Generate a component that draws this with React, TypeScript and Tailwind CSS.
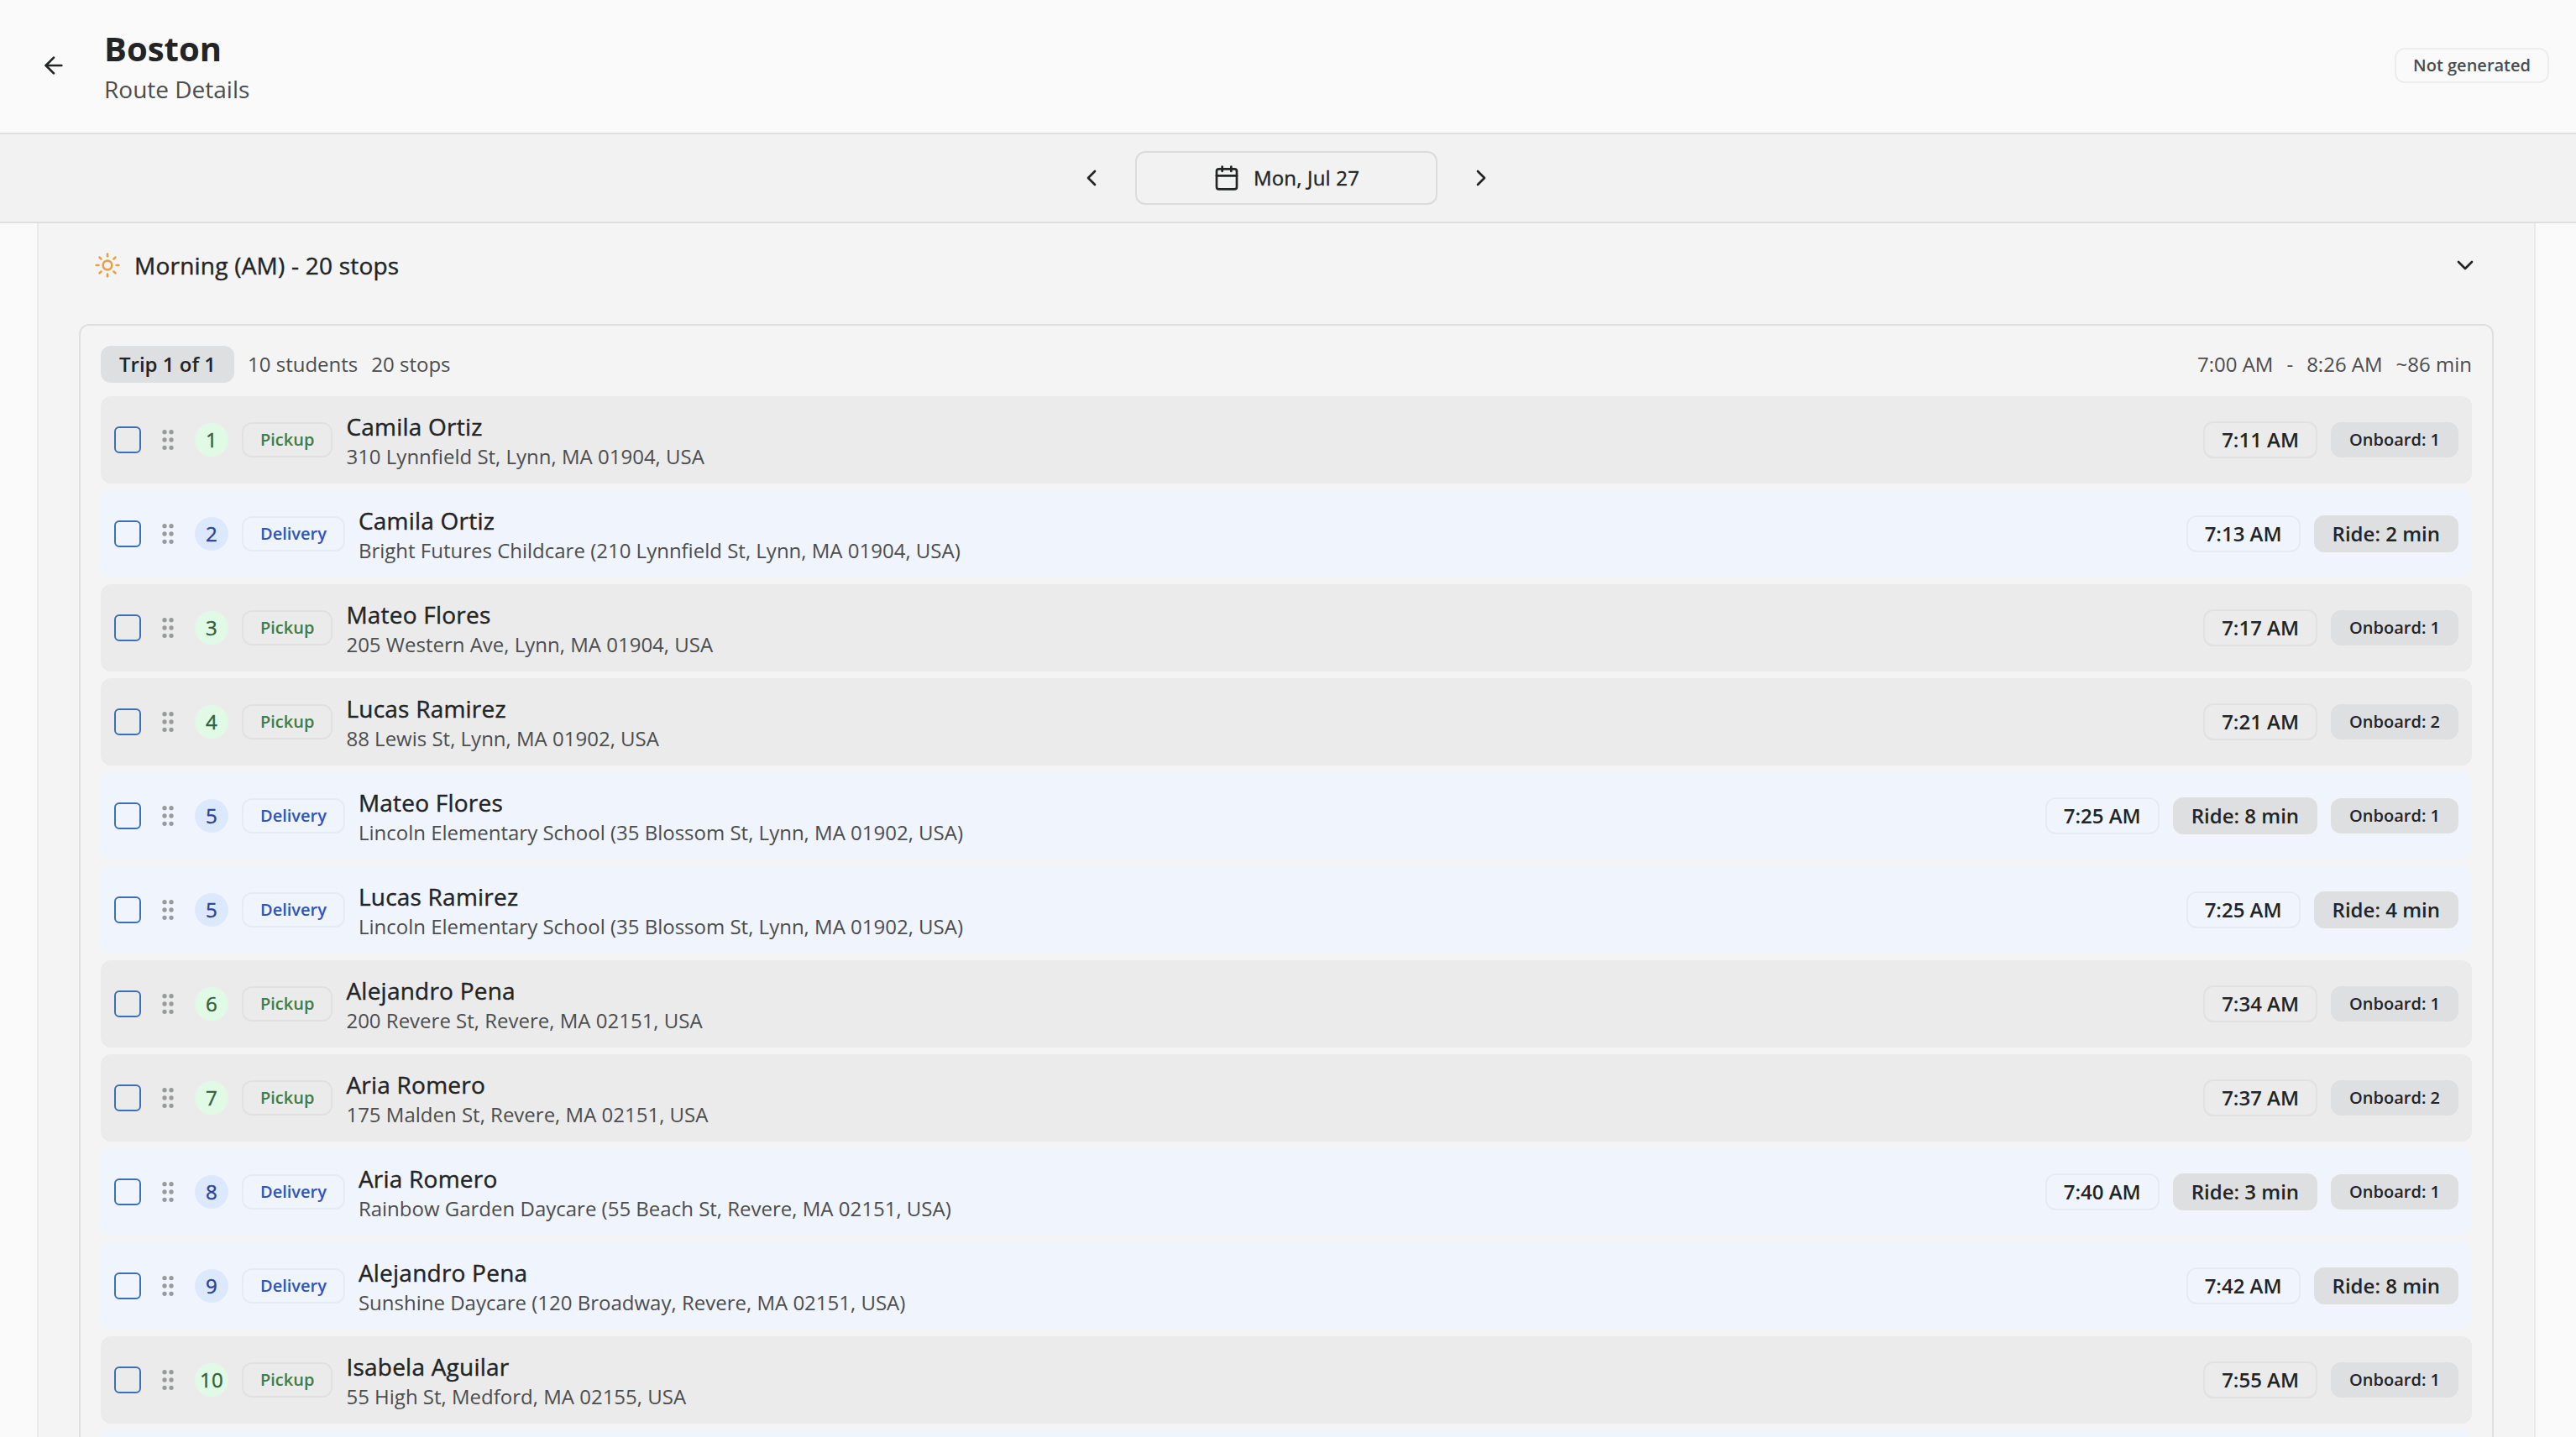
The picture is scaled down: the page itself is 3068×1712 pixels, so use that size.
import { useState } from "react";
import { ArrowLeft, Calendar, ChevronDown, ChevronLeft, ChevronRight, GripVertical, Sun } from "lucide-react";
import clsx from "clsx";

type Stop = {
  order: number;
  type: "pickup" | "delivery";
  name: string;
  address: string;
  time: string;
  ride?: string;
  onboard?: number;
};

const STOPS: Stop[] = [
  { order: 1, type: "pickup", name: "Camila Ortiz", address: "310 Lynnfield St, Lynn, MA 01904, USA", time: "7:11 AM", onboard: 1 },
  { order: 2, type: "delivery", name: "Camila Ortiz", address: "Bright Futures Childcare (210 Lynnfield St, Lynn, MA 01904, USA)", time: "7:13 AM", ride: "2 min" },
  { order: 3, type: "pickup", name: "Mateo Flores", address: "205 Western Ave, Lynn, MA 01904, USA", time: "7:17 AM", onboard: 1 },
  { order: 4, type: "pickup", name: "Lucas Ramirez", address: "88 Lewis St, Lynn, MA 01902, USA", time: "7:21 AM", onboard: 2 },
  { order: 5, type: "delivery", name: "Mateo Flores", address: "Lincoln Elementary School (35 Blossom St, Lynn, MA 01902, USA)", time: "7:25 AM", ride: "8 min", onboard: 1 },
  { order: 5, type: "delivery", name: "Lucas Ramirez", address: "Lincoln Elementary School (35 Blossom St, Lynn, MA 01902, USA)", time: "7:25 AM", ride: "4 min" },
  { order: 6, type: "pickup", name: "Alejandro Pena", address: "200 Revere St, Revere, MA 02151, USA", time: "7:34 AM", onboard: 1 },
  { order: 7, type: "pickup", name: "Aria Romero", address: "175 Malden St, Revere, MA 02151, USA", time: "7:37 AM", onboard: 2 },
  { order: 8, type: "delivery", name: "Aria Romero", address: "Rainbow Garden Daycare (55 Beach St, Revere, MA 02151, USA)", time: "7:40 AM", ride: "3 min", onboard: 1 },
  { order: 9, type: "delivery", name: "Alejandro Pena", address: "Sunshine Daycare (120 Broadway, Revere, MA 02151, USA)", time: "7:42 AM", ride: "8 min" },
  { order: 10, type: "pickup", name: "Isabela Aguilar", address: "55 High St, Medford, MA 02155, USA", time: "7:55 AM", onboard: 1 },
];

const SMALL_BADGE = "shrink-0 rounded-xl border-2 px-5 py-1 text-[20px] leading-[30px] font-semibold";
const BADGE = "shrink-0 rounded-xl border-2 px-5 py-1 text-2xl leading-8 font-semibold";
// Open Sans has no static 500 weight, so thicken the regular cut a little
const MEDIUM = "font-medium tracking-[0.008em] [-webkit-text-stroke:0.4px_currentColor]";

function StopRow({ stop }: { stop: Stop }) {
  const [checked, setChecked] = useState(false);
  const pickup = stop.type === "pickup";

  return (
    <div className={clsx("flex h-[104px] shrink-0 items-center gap-4 rounded-xl px-4", pickup ? "bg-[#ebebeb]" : "bg-[#f0f4fc]")}>
      <button
        role="checkbox"
        aria-checked={checked}
        onClick={() => setChecked(!checked)}
        className={clsx("size-8 shrink-0 rounded-md border-2 border-[#3a70b8]", checked && "bg-[#3a70b8]")}
      />
      <GripVertical size={32} className="shrink-0 text-[#999a9b]" />
      <span
        className={clsx(
          "flex size-10 shrink-0 items-center justify-center rounded-full text-2xl",
          MEDIUM,
          pickup ? "bg-[#e0fae6] text-[#33613d]" : "bg-[#dce8fb] text-[#2b439a]"
        )}
      >
        {stop.order}
      </span>
      <span className={clsx(SMALL_BADGE, "border-black/4", pickup ? "text-[#427c46]" : "text-[#3153bf]")}>
        {pickup ? "Pickup" : "Delivery"}
      </span>
      <div className="min-w-0 flex-1">
        <p className={clsx("truncate text-[28px] leading-10", MEDIUM)}>{stop.name}</p>
        <p className="truncate text-2xl leading-8 text-[#4b4d4e]">{stop.address}</p>
      </div>
      <span className={clsx(BADGE, "border-black/4")}>{stop.time}</span>
      {stop.ride && <span className={clsx(BADGE, "border-transparent bg-[#dedfe1]")}>Ride: {stop.ride}</span>}
      {stop.onboard && <span className={clsx(SMALL_BADGE, "border-transparent bg-[#dedfe1]")}>Onboard: {stop.onboard}</span>}
    </div>
  );
}

export default function App() {
  return (
    <div className="flex h-screen flex-col overflow-hidden bg-[#fafafa] font-['Open_Sans',sans-serif] text-[#222425]">
      <header className="flex h-40 shrink-0 items-center border-b-2 border-[#dfdfdf] px-8 pb-0.5">
        <button className="mr-7 flex size-16 items-center justify-center">
          <ArrowLeft size={32} />
        </button>
        <div className="flex-1">
          <h1 className="text-[40px] leading-[56px] font-bold">Boston</h1>
          <p className="text-[28px] leading-10 text-[#4b4d4e]">Route Details</p>
        </div>
        <span className={clsx(SMALL_BADGE, "border-black/5 text-[#4b4d4e]")}>Not generated</span>
      </header>

      <div className="flex h-[106px] shrink-0 items-center justify-center gap-4 border-b-2 border-[#dfdfdf] bg-[#f2f2f2] pr-1">
        <button className="flex h-16 w-[72px] items-center justify-center">
          <ChevronLeft size={32} />
        </button>
        <button className={clsx("flex h-16 w-[360px] items-center justify-center gap-4 rounded-xl border-2 border-[#dbdcdc] text-2xl", MEDIUM)}>
          <Calendar size={32} />
          Mon, Jul 27
        </button>
        <button className="flex h-16 w-[72px] items-center justify-center">
          <ChevronRight size={32} />
        </button>
      </div>

      <main className="flex min-h-0 flex-1 flex-col overflow-hidden pr-12 pl-11">
        <section className="shrink-0 border-x-2 border-[#e9e9e9] bg-[#f4f4f4] px-12">
          <button className={clsx("flex h-[100px] w-full items-center gap-4 px-[18px] text-[28px]", MEDIUM)}>
            <Sun size={32} className="text-[#e7a144]" />
            <span className="flex-1 text-left">Morning (AM) - 20 stops</span>
            <ChevronDown size={32} />
          </button>

          <div className="mt-5 rounded-xl border-2 border-[#dfdfdf] p-6">
            <div className="mb-4 flex items-center gap-4 text-2xl leading-8 text-[#4b4d4e]">
              <span className={clsx(BADGE, "border-transparent bg-[#dedfe1] text-[#222425]")}>Trip 1 of 1</span>
              <span>10 students</span>
              <span className="flex-1">20 stops</span>
              <span>7:00 AM</span>
              <span>-</span>
              <span>8:26 AM</span>
              <span>~86 min</span>
            </div>
            <div className="flex flex-col gap-2">
              {STOPS.map((stop, i) => (
                <StopRow key={i} stop={stop} />
              ))}
              <div className="h-[104px] rounded-xl bg-[#f0f4fc]" />
            </div>
          </div>
        </section>
      </main>
    </div>
  );
}
